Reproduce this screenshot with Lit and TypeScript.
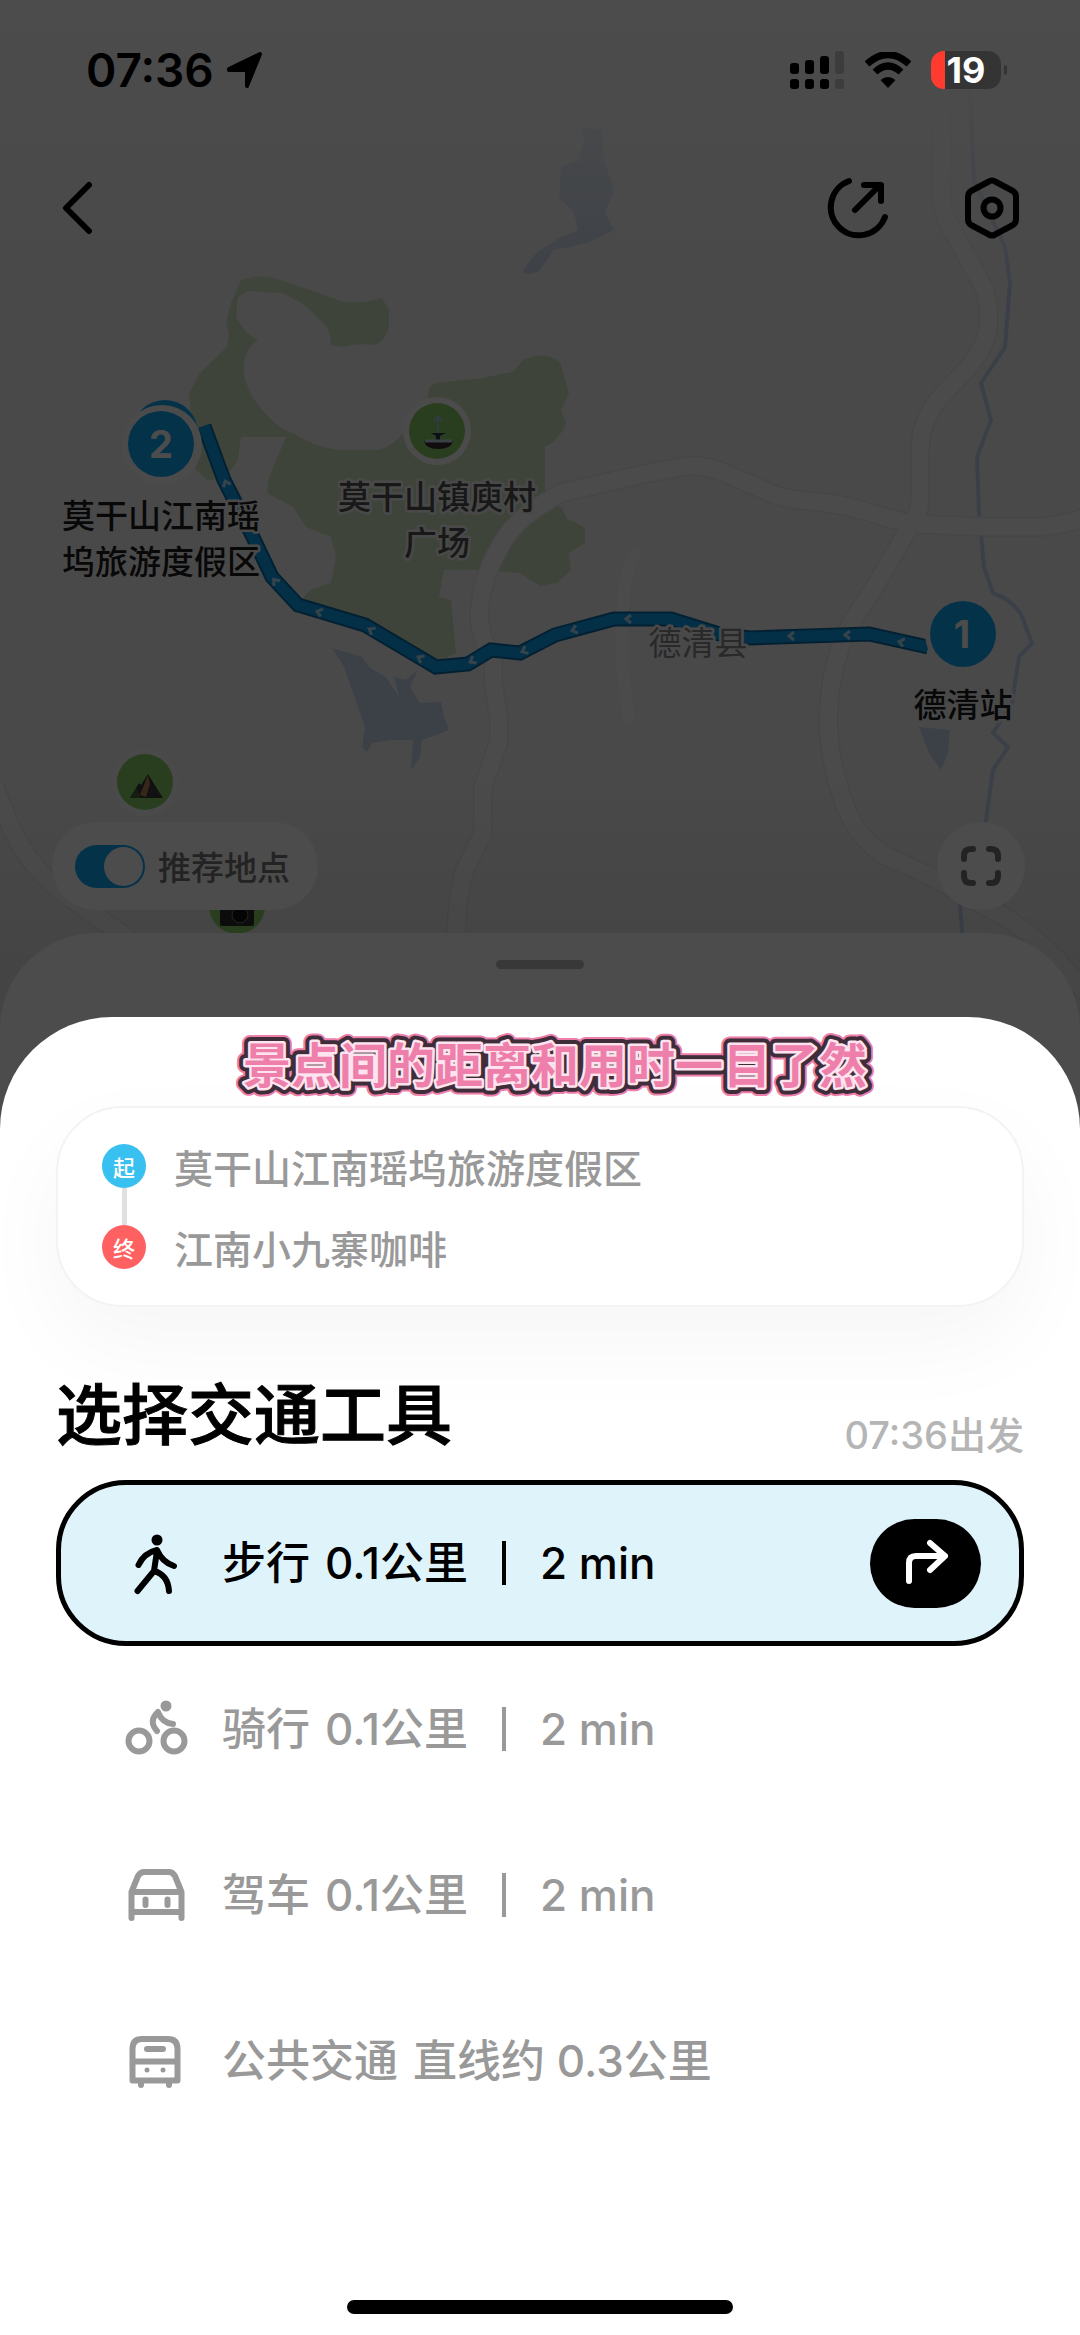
import { LitElement, html, css, svg, nothing } from "lit";
import type { SVGTemplateResult } from "lit";
import { customElement, state } from "lit/decorators.js";
import { classMap } from "lit/directives/class-map.js";

interface TravelMode {
  id: string;
  name: string;
  detail: string;
  duration?: string;
  icon: SVGTemplateResult;
}

const walkIcon = svg`
  <circle cx="33" cy="9" r="5.5" fill="currentColor" stroke="none"></circle>
  <path d="M14.5 34Q20 22 33 19Q38 31 50 35M33 20L30 40L13.500 60M30 40Q44 44 45 60"></path>`;

const bikeIcon = svg`
  <circle cx="42" cy="9" r="5.500" fill="currentColor" stroke="none"></circle>
  <circle cx="15" cy="44" r="10.500"></circle>
  <circle cx="50" cy="44" r="10.500"></circle>
  <path d="M33 34Q24 24 34 15Q38 26 49 27"></path>`;

const carIcon = svg`
  <path d="M7.500 55V29L14 13Q16.500 9 20 9H45Q48.500 9 51 13L57.500 29V55M7.500 29H57.500M7.500 49H57.500"></path>
  <path d="M21.500 36.500V42M43.500 36.500V42"></path>`;

const busIcon = svg`
  <path d="M8.500 51.500V20Q8.500 10 18 10H44Q53.500 10 53.500 20V51.500ZM8.500 32.500H53.500M17 52V56M45 52V56M23 20H39"></path>
  <circle cx="23" cy="41" r="2.500" fill="currentColor" stroke="none"></circle>
  <circle cx="39" cy="41" r="2.500" fill="currentColor" stroke="none"></circle>`;

const MODES: TravelMode[] = [
  { id: "walk", name: "步行", detail: "0.1公里", duration: "2 min", icon: walkIcon },
  { id: "bike", name: "骑行", detail: "0.1公里", duration: "2 min", icon: bikeIcon },
  { id: "car", name: "驾车", detail: "0.1公里", duration: "2 min", icon: carIcon },
  { id: "bus", name: "公共交通", detail: "直线约 0.3公里", icon: busIcon },
];

const ROADS = [
  "M942 90L941 200Q944 218 955 235L985 290Q992 320 986 338Q980 354 966 370L936 402Q920 425 920 450V500Q920 515 908 530L877 583L853 620Q838 645 832 680Q822 735 840 790Q852 835 884 855L932 877L1005 917Q1050 945 1084 992",
  "M456 940Q456 900 465 870L483 833V787L499 740V720L493 680V660Q476 630 480 605Q484 570 506 537Q520 515 561 493L643 474L688 466Q705 465 722 472L775 495Q790 500 820 502Q850 505 880 516L912 524L988 527H1039Q1060 526 1090 516",
  "M-6 785L10 825Q30 870 70 898L131 940",
];

const ROUTE =
  "M204 426L224 480L251 533L272 577L298 605L365 625L436 667L468 664L491 650L520 653L555 635L614 619H671L719 634L750 638L869 634L928 647";

/* x, y and heading of each direction mark on the route */
const MARKS: Array<[number, number, number]> = [
  [226, 483, 68], [275, 581, 50], [319, 612, 17], [371, 630, 31], [420, 658, 30], [472, 661, -30],
  [524, 651, -25], [574, 630, -16], [628, 619, 0], [791, 636, 0], [847, 635, 0], [901, 642, 14],
];

@customElement("route-map")
class RouteMap extends LitElement {
  static styles = css`
    :host { display: block; background: #f4f4f4; }
    .canvas { display: block; width: 100%; height: auto; }
    .green { fill: #d1e4c2; }
    .water { fill: #c8d8ee; }
    .river { fill: none; stroke: #c6d6f0; stroke-width: 4; }
    .road-edge { fill: none; stroke: #e9e9e9; stroke-width: 20; }
    .road { fill: none; stroke: #fafafa; stroke-width: 17; }
    .lane { fill: none; stroke: #fafafa; stroke-width: 12; stroke-linecap: round; }
    .route-edge { fill: none; stroke: #0a6ca8; stroke-width: 15; }
    .route { fill: none; stroke: #10a2ee; stroke-width: 11; }
    .mark { fill: none; stroke: #b4e0fa; stroke-width: 3; }
    .ring { fill: #fbfbfb; }
    .pin { fill: #10a8f4; }
    .spot { fill: #8bd068; }
    .label {
      font: 400 33px "Noto Sans CJK SC", sans-serif;
      text-anchor: middle;
      paint-order: stroke;
      stroke: #f6f6f6;
      stroke-width: 5;
      stroke-linejoin: round;
    }
    .stop { fill: #1c1c1c; font-weight: 500; }
    .place { fill: #505050; font-weight: 500; }
    .county { fill: #8a8a8a; }
    .number { font: 700 38px Inter, sans-serif; fill: #fff; text-anchor: middle; }
  `;

  render() {
    return html`
      <svg class="canvas" viewBox="0 0 1080 1130" role="img" aria-label="路线地图">
        <defs>
          <linearGradient id="top" x1="0" y1="0" x2="0" y2="1">
            <stop offset="0" stop-color="#fdfdfd"></stop>
            <stop offset="0.3" stop-color="#fdfdfd" stop-opacity="0.85"></stop>
            <stop offset="0.7" stop-color="#fdfdfd" stop-opacity="0.4"></stop>
            <stop offset="1" stop-color="#fdfdfd" stop-opacity="0.1"></stop>
          </linearGradient>
          <linearGradient id="bottom" x1="0" y1="0" x2="0" y2="1">
            <stop offset="0" stop-color="#000" stop-opacity="0"></stop>
            <stop offset="0.5" stop-color="#000" stop-opacity="0.06"></stop>
            <stop offset="1" stop-color="#000" stop-opacity="0.06"></stop>
          </linearGradient>
        </defs>
        <path class="green" d="M231 303L241 280L258 276L275 278L310 290L344 302H365L382 298L389 310V327Q386 340 375 345Q355 343 344 347L331 345Q331 333 325 325L310 310L300 302L282 293L248 291L238 297L236 317Q246 335 258 340Q242 350 244 375Q250 400 269 417Q280 430 293 433Q315 448 341 450H379Q393 446 403 433L427 403L429 388Q433 382 444 382L482 378L513 372L523 360Q545 350 560 362L569 393L561 410L566 423Q560 440 545 447V505L561 507L568 520Q582 524 585 530V543L569 553L571 570L557 583L540 586L520 573L479 570H444L439 597L451 600L456 653L437 662L365 625L303 598L310 590L331 583L336 557L331 537L306 527L293 507L267 493L269 477L286 437H241L238 460Q225 482 207 480L196 470L189 393L200 373L227 347L229 333L226 323Z"></path>
        <g class="water">
          <path d="M581 127L602 130L604 160L614 190L605 213L614 230L588 243L554 250L540 270Q530 277 523 272Q530 258 540 250L561 237L578 230L574 213L559 197L561 167L578 160L585 140Z"></path>
          <path d="M332 648L362 657L370 668L386 677L399 697L394 677L406 680L418 670L410 687L420 703L441 702L444 717L449 730L422 740L420 757L411 770L413 740L390 740L372 743L367 752L362 747L365 727L358 707L344 667Z"></path>
          <path d="M919 727L950 730L948 753L941 770L929 753Z"></path>
        </g>
        <path class="river" d="M970 90L974 180L1005 247L1010 283L1005 347L981 383L991 420L977 457L979 513L984 567L993 593Q1020 603 1025 625L1032 643L1019 657L1012 703L993 733L1008 747L993 770L986 820L960 907L963 940"></path>
        ${ROADS.map((d) => svg`<path class="road-edge" d=${d}></path>`)}
        ${ROADS.map((d) => svg`<path class="road" d=${d}></path>`)}
        <path class="lane" d="M635 555Q622 580 623 610L621 660L629 718"></path>
        <rect width="1080" height="290" fill="url(#top)"></rect>
        <rect y="780" width="1080" height="350" fill="url(#bottom)"></rect>

        <path class="route-edge" d=${ROUTE}></path>
        <path class="route" d=${ROUTE}></path>
        ${MARKS.map(
          ([x, y, a]) => svg`<path class="mark" d="M3 -4L-2 0L3 4" transform="translate(${x} ${y}) rotate(${a})"></path>`,
        )}

        <circle class="pin" cx="165" cy="433" r="33"></circle>
        <circle class="ring" cx="162" cy="445" r="40"></circle>
        <circle class="pin" cx="161" cy="444" r="33"></circle>
        <text class="number" x="161" y="458">2</text>
        <circle cx="963" cy="634" r="38" fill="#f5f5f5"></circle>
        <circle class="pin" cx="963" cy="634" r="33"></circle>
        <text class="number" x="962" y="648">1</text>

        <circle class="ring" cx="437" cy="431" r="34"></circle>
        <circle class="spot" cx="437" cy="431" r="28"></circle>
        <g>
          <path d="M438 416V436M434 422Q438 412 442 422" fill="none" stroke="#a9c4dd" stroke-width="2"></path>
          <path d="M431 433H446L440 436V441H436V436Z" fill="#26384a"></path>
          <path d="M424 441H453Q451 449 438 449Q426 449 424 441Z" fill="#3a2a30"></path>
          <path d="M425 441H452" stroke="#c2d8e8" stroke-width="3"></path>
        </g>

        <circle cx="145" cy="782" r="34" fill="#f7f7f7"></circle>
        <circle class="spot" cx="145" cy="782" r="28"></circle>
        <path d="M130 798L139 783L141 785L148 774L156 787L163 798Z" fill="#3b3a3c"></path>
        <path d="M140 795L148 775L150 784L146 797Z" fill="#b58258"></path>
        <path d="M130 798L136 788L141 798Z" fill="#47643a"></path>

        <circle class="spot" cx="237" cy="906" r="28"></circle>
        <rect x="220" y="900" width="34" height="26" rx="2" fill="#2b2b2b"></rect>
        <circle cx="240" cy="915" r="8" fill="#111" stroke="#777" stroke-width="1"></circle>

        <text class="label place" x="437" y="509">莫干山镇庾村</text>
        <text class="label place" x="437" y="555">广场</text>
        <text class="label county" x="698" y="655">德清县</text>
        <text class="label stop" x="161" y="528">莫干山江南瑶</text>
        <text class="label stop" x="161" y="574">坞旅游度假区</text>
        <text class="label stop" x="963" y="717">德清站</text>
      </svg>
    `;
  }
}

@customElement("app-root")
class AppRoot extends LitElement {
  @state() private mode = "walk";
  @state() private recommended = true;

  static styles = css`
    :host {
      display: flex;
      flex-direction: column;
      position: relative;
      min-height: 100vh;
      overflow: hidden;
      background: #fff;
      color: #000;
      font-family: Inter, "Noto Sans CJK SC", sans-serif;
    }
    * { box-sizing: border-box; }
    button {
      display: flex;
      align-items: center;
      justify-content: center;
      padding: 0;
      border: 0;
      background: none;
      color: inherit;
      font: inherit;
    }
    svg { display: block; flex: none; }
    .line {
      fill: none;
      stroke: currentColor;
      stroke-width: 6;
      stroke-linecap: round;
      stroke-linejoin: round;
    }

    .behind { flex: 1; display: flex; flex-direction: column; }
    .scene { position: absolute; inset: 0; }
    .scrim { position: absolute; inset: 0; background: rgba(0, 0, 0, 0.7); z-index: 1; }

    .status {
      position: relative;
      z-index: 2;
      display: flex;
      align-items: center;
      padding: 38px 73px 0 86px;
      height: 102px;
    }
    .clock { font-size: 46px; font-weight: 600; margin-right: 12px; }
    .signal { margin-left: auto; margin-right: 21px; }
    .wifi { margin-right: 20px; }
    .battery {
      display: flex;
      align-items: center;
      justify-content: center;
      width: 70px;
      height: 38px;
      border-radius: 13px;
      background: linear-gradient(90deg, #ff3b30 14px, #343434 14px);
      color: #fff;
      font-size: 36px;
      font-weight: 700;
    }
    .nub { width: 3px; height: 10px; margin-left: 3px; border-radius: 0 3px 3px 0; background: #343434; }

    .nav {
      position: relative;
      display: flex;
      align-items: center;
      gap: 62px;
      padding: 0 52px 0 42px;
      margin-top: 70px;
    }
    .nav button { width: 72px; height: 72px; }
    .back { margin-right: auto; }

    .tools {
      position: relative;
      display: flex;
      align-items: center;
      justify-content: space-between;
      margin: auto 55px 23px 52px;
    }
    .toggle {
      display: flex;
      align-items: center;
      gap: 13px;
      height: 88px;
      padding: 0 28px 0 23px;
      border-radius: 44px;
      background: #fdfdfd;
      color: #777;
      font-size: 33px;
      font-weight: 500;
    }
    .switch {
      appearance: none;
      display: flex;
      align-items: center;
      width: 70px;
      height: 43px;
      margin: 0;
      padding: 2px;
      border-radius: 22px;
      background: #ccc;
    }
    .switch::before {
      content: "";
      width: 39px;
      height: 39px;
      border-radius: 50%;
      background: #fff;
    }
    .switch:checked { justify-content: flex-end; background: #10a8f4; }
    .expand { width: 88px; height: 88px; border-radius: 50%; background: #fdfdfd; color: #777; }

    .drawer {
      position: relative;
      display: flex;
      justify-content: center;
      height: 196px;
      padding-top: 27px;
      border-radius: 96px 96px 0 0;
      background: #fdfdfd;
    }
    .handle { width: 88px; height: 9px; border-radius: 5px; background: #bbb; }

    .sheet {
      position: relative;
      z-index: 2;
      margin-top: -112px;
      padding: 16px 56px 21px;
      border-radius: 112px 112px 0 0;
      background: #fff;
    }
    .caption {
      position: relative;
      z-index: 1;
      width: 100%;
      height: 64px;
      overflow: visible;
      font: 700 48px "Noto Sans CJK SC", sans-serif;
      text-anchor: middle;
      stroke-linejoin: round;
    }
    .glow { fill: #ee7fab; stroke: #ee7fab; stroke-width: 17; }
    .outline { fill: #3f2d3a; stroke: #3f2d3a; stroke-width: 13; }
    .face { fill: #ee7fab; stroke: #fde4ef; stroke-width: 5; paint-order: stroke; }

    .trip {
      position: relative;
      display: flex;
      flex-direction: column;
      gap: 37px;
      margin: 9px 0 0;
      padding: 36px 44px;
      border: 2px solid #f3f3f3;
      border-radius: 66px;
      background: #fff;
      box-shadow: 0 36px 90px rgba(0, 0, 0, 0.04);
      list-style: none;
    }
    .point {
      position: relative;
      display: flex;
      align-items: center;
      gap: 28px;
      height: 44px;
      color: #999;
      font-size: 39px;
      font-weight: 500;
    }
    .badge {
      display: flex;
      align-items: center;
      justify-content: center;
      width: 44px;
      height: 44px;
      border-radius: 50%;
      background: #38c0f0;
      color: #fff;
      font-size: 22px;
    }
    .end { background: #ff6163; }
    .point + .point::before {
      content: "";
      position: absolute;
      left: 20px;
      bottom: 100%;
      width: 5px;
      height: 37px;
      background: #e0e0e0;
    }

    .head {
      position: relative;
      display: flex;
      align-items: flex-end;
      justify-content: space-between;
      margin: 68px 0 25px;
    }
    .title {
      margin: 0;
      font-size: 66px;
      line-height: 80px;
      font-weight: 500;
      -webkit-text-stroke: 1px currentColor;
    }
    .depart { color: #b5b5b5; font-size: 38px; line-height: 40px; font-weight: 500; }

    .modes { position: relative; margin: 0; padding: 0; list-style: none; }
    .mode {
      display: flex;
      align-items: center;
      height: 166px;
      padding: 0 38px 0 63px;
      border: 5px solid transparent;
      border-radius: 70px;
      color: #999;
      font-size: 44px;
      line-height: 54px;
      font-weight: 500;
    }
    .active { border-color: #000; background: #dff3fb; color: #000; }
    .choice { display: flex; align-items: center; flex: 1; height: 100%; }
    .radio { appearance: none; width: 0; height: 0; margin: 0; }
    .name { margin: 0 15px 0 34px; }
    .bar { width: 4px; height: 44px; margin: 0 34px; background: currentColor; }
    .go { width: 111px; height: 89px; border-radius: 45px; background: #000; color: #fff; }

    .home { width: 386px; height: 14px; margin: 156px auto 0; border-radius: 7px; background: #000; }
  `;

  private renderMode(m: TravelMode) {
    const active = m.id === this.mode;
    return html`
      <li class=${classMap({ mode: true, active })}>
        <label class="choice">
          <input
            class="radio"
            type="radio"
            name="mode"
            .checked=${active}
            @change=${() => (this.mode = m.id)}
          />
          <svg class="line" width="64" height="64" viewBox="0 0 64 64" aria-hidden="true">${m.icon}</svg>
          <span class="name">${m.name}</span>
          <span>${m.detail}</span>
          ${m.duration ? html`<i class="bar"></i><span>${m.duration}</span>` : nothing}
        </label>
        ${active
          ? html`<button class="go" aria-label="导航">
              <svg class="line" width="48" height="48" viewBox="0 0 48 48">
                <path d="M7 42V24Q7 17 14 17H43M28 4L43 17L28 31"></path>
              </svg>
            </button>`
          : nothing}
      </li>
    `;
  }

  render() {
    return html`
      <route-map class="scene"></route-map>
      <div class="behind">
        <header class="status">
          <span class="clock">07:36</span>
          <svg width="38" height="38" viewBox="0 0 38 38">
            <path d="M3 18L34 3L21 35V19H3Z" stroke="#000" stroke-width="4" stroke-linejoin="round"></path>
          </svg>
          <svg class="signal" width="54" height="38" viewBox="0 0 54 38">
            <rect y="12" width="9" height="11" rx="3"></rect>
            <rect x="15" y="9" width="9" height="14" rx="3"></rect>
            <rect x="30" y="5" width="9" height="18" rx="3"></rect>
            <rect x="45" width="9" height="23" rx="3" fill="#3c3c3c"></rect>
            <rect y="28" width="9" height="10" rx="3"></rect>
            <rect x="15" y="28" width="9" height="10" rx="3"></rect>
            <rect x="30" y="28" width="9" height="10" rx="3"></rect>
            <rect x="45" y="28" width="9" height="10" rx="3" fill="#3c3c3c"></rect>
          </svg>
          <svg class="wifi" width="46" height="36" viewBox="0 0 46 36">
            <path d="M2 12Q23 -7 44 12M10 20Q23 8 36 20" fill="none" stroke="#000" stroke-width="7"></path>
            <path d="M23 36L15.500 28Q23 22 30.500 28Z"></path>
          </svg>
          <span class="battery">19</span><i class="nub"></i>
        </header>

        <nav class="nav">
          <button class="back" aria-label="返回">
            <svg class="line" width="32" height="54" viewBox="0 0 32 54">
              <path d="M27 4L4 27L27 50"></path>
            </svg>
          </button>
          <button aria-label="分享">
            <svg class="line" width="64" height="64" viewBox="0 0 64 64">
              <path d="M23 5A28 28 0 1 0 59 41M29 34L54 9M38 9H55V25"></path>
            </svg>
          </button>
          <button aria-label="设置">
            <svg class="line" width="64" height="64" viewBox="0 0 64 64">
              <path d="M28 6Q32 3 36 6L53 15Q56 17 56 21V43Q56 47 53 49L36 58Q32 61 28 58L11 49Q8 47 8 43V21Q8 17 11 15Z"></path>
              <circle cx="32" cy="32" r="8.500"></circle>
            </svg>
          </button>
        </nav>

        <div class="tools">
          <label class="toggle">
            <input
              class="switch"
              type="checkbox"
              role="switch"
              .checked=${this.recommended}
              @change=${() => (this.recommended = !this.recommended)}
            />
            推荐地点
          </label>
          <button class="expand" aria-label="全屏">
            <svg class="line" width="40" height="40" viewBox="0 0 40 40">
              <path d="M3 13V10Q3 3 10 3H12M28 3H30Q37 3 37 10V13M37 27V30Q37 37 30 37H28M12 37H10Q3 37 3 30V27"></path>
            </svg>
          </button>
        </div>

        <div class="drawer"><i class="handle"></i></div>
      </div>
      <div class="scrim"></div>

      <main class="sheet">
        <svg class="caption" viewBox="0 0 968 64">
          <use class="glow" href="#caption-text"></use>
          <use class="outline" href="#caption-text"></use>
          <g class="face">
            <text id="caption-text" x="499" y="50">景点间的距离和用时一目了然</text>
          </g>
        </svg>
        <ul class="trip">
          <li class="point"><span class="badge">起</span>莫干山江南瑶坞旅游度假区</li>
          <li class="point"><span class="badge end">终</span>江南小九寨咖啡</li>
        </ul>
        <div class="head">
          <h1 class="title">选择交通工具</h1>
          <span class="depart">07:36出发</span>
        </div>
        <ul class="modes">
          ${MODES.map((m) => this.renderMode(m))}
        </ul>
        <div class="home"></div>
      </main>
    `;
  }
}
